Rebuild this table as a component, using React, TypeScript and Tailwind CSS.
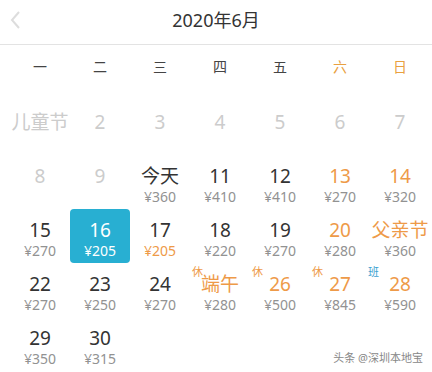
import React from "react";

type Cell = {
  label?: string;
  price?: string;
  tone?: "faded" | "normal" | "weekend";
  priceTone?: "grey" | "orange";
  selected?: boolean;
  tag?: "休" | "班";
};

const rows: Cell[][] = [
  [
    { label: "儿童节", tone: "faded" },
    { label: "2", tone: "faded" },
    { label: "3", tone: "faded" },
    { label: "4", tone: "faded" },
    { label: "5", tone: "faded" },
    { label: "6", tone: "faded" },
    { label: "7", tone: "faded" },
  ],
  [
    { label: "8", tone: "faded" },
    { label: "9", tone: "faded" },
    { label: "今天", price: "¥360" },
    { label: "11", price: "¥410" },
    { label: "12", price: "¥410" },
    { label: "13", price: "¥270", tone: "weekend" },
    { label: "14", price: "¥320", tone: "weekend" },
  ],
  [
    { label: "15", price: "¥270" },
    { label: "16", price: "¥205", selected: true },
    { label: "17", price: "¥205", priceTone: "orange" },
    { label: "18", price: "¥220" },
    { label: "19", price: "¥270" },
    { label: "20", price: "¥280", tone: "weekend" },
    { label: "父亲节", price: "¥360", tone: "weekend" },
  ],
  [
    { label: "22", price: "¥270" },
    { label: "23", price: "¥250" },
    { label: "24", price: "¥270" },
    { label: "端午", price: "¥280", tone: "weekend", tag: "休" },
    { label: "26", price: "¥500", tone: "weekend", tag: "休" },
    { label: "27", price: "¥845", tone: "weekend", tag: "休" },
    { label: "28", price: "¥590", tone: "weekend", tag: "班" },
  ],
  [
    { label: "29", price: "¥350" },
    { label: "30", price: "¥315" },
    {},
    {},
    {},
    {},
    {},
  ],
];

const weekdays = ["一", "二", "三", "四", "五", "六", "日"];

function DayCell({ c }: { c: Cell }) {
  if (!c.label) return <div className="h-[54px]" />;
  const labelColor = c.selected
    ? "text-white"
    : c.tone === "faded"
    ? "text-[#cccccc]"
    : c.tone === "weekend"
    ? "text-[#ee9a48]"
    : "text-[#333333]";
  const priceColor = c.selected
    ? "text-white"
    : c.priceTone === "orange"
    ? "text-[#ee9a48]"
    : "text-[#929292]";
  return (
    <div
      className={`relative h-[54px] flex flex-col items-center pt-[10px] rounded-[4px] ${
        c.selected ? "bg-[#28afd2]" : ""
      }`}
    >
      {c.tag && (
        <span
          className={`absolute top-[2px] text-[11px] leading-[13px] ${
            c.tag === "班" ? "left-[-2px] text-[#3d9fd0]" : "left-[2px] text-[#ee9a48]"
          }`}
        >
          {c.tag}
        </span>
      )}
      <span className={`text-[19px] leading-[22px] whitespace-nowrap ${labelColor}`}>{c.label}</span>
      {c.price && (
        <span className={`text-[14px] leading-[18px] mt-[1px] ${priceColor}`}>{c.price}</span>
      )}
    </div>
  );
}

export default function App() {
  return (
    <div
      className="w-[432px] h-[372px] bg-white relative overflow-hidden"
      style={{ fontFamily: '"Noto Sans", "Noto Sans CJK SC", sans-serif' }}
    >
      <div className="relative h-[45px] flex items-center justify-center border-b border-[#e3e3e3]">
        <svg
          className="absolute left-[9px] top-[10px]"
          width="12"
          height="20"
          viewBox="0 0 12 20"
          fill="none"
        >
          <path d="M10 2 L3 10 L10 18" stroke="#dddddd" strokeWidth="2" />
        </svg>
        <span className="text-[18px] leading-[24px] text-[#333333] -mt-[4px]">2020年6月</span>
      </div>
      <div className="grid grid-cols-[repeat(7,60px)] pl-[10px] h-[56px] items-start pt-[12px]">
        {weekdays.map((w, i) => (
          <div
            key={w}
            className={`text-center text-[14px] leading-[20px] ${
              i >= 5 ? "text-[#e9a040]" : "text-[#444444]"
            }`}
          >
            {w}
          </div>
        ))}
      </div>
      <div className="pl-[10px] flex flex-col">
        {rows.map((r, ri) => (
          <div key={ri} className="grid grid-cols-[repeat(7,60px)]">
            {r.map((c, ci) => (
              <DayCell key={ci} c={c} />
            ))}
          </div>
        ))}
      </div>
      <div className="absolute right-[9px] bottom-[6px] text-[11px] leading-[16px] text-[#888888]">
        头条 @深圳本地宝
      </div>
    </div>
  );
}
